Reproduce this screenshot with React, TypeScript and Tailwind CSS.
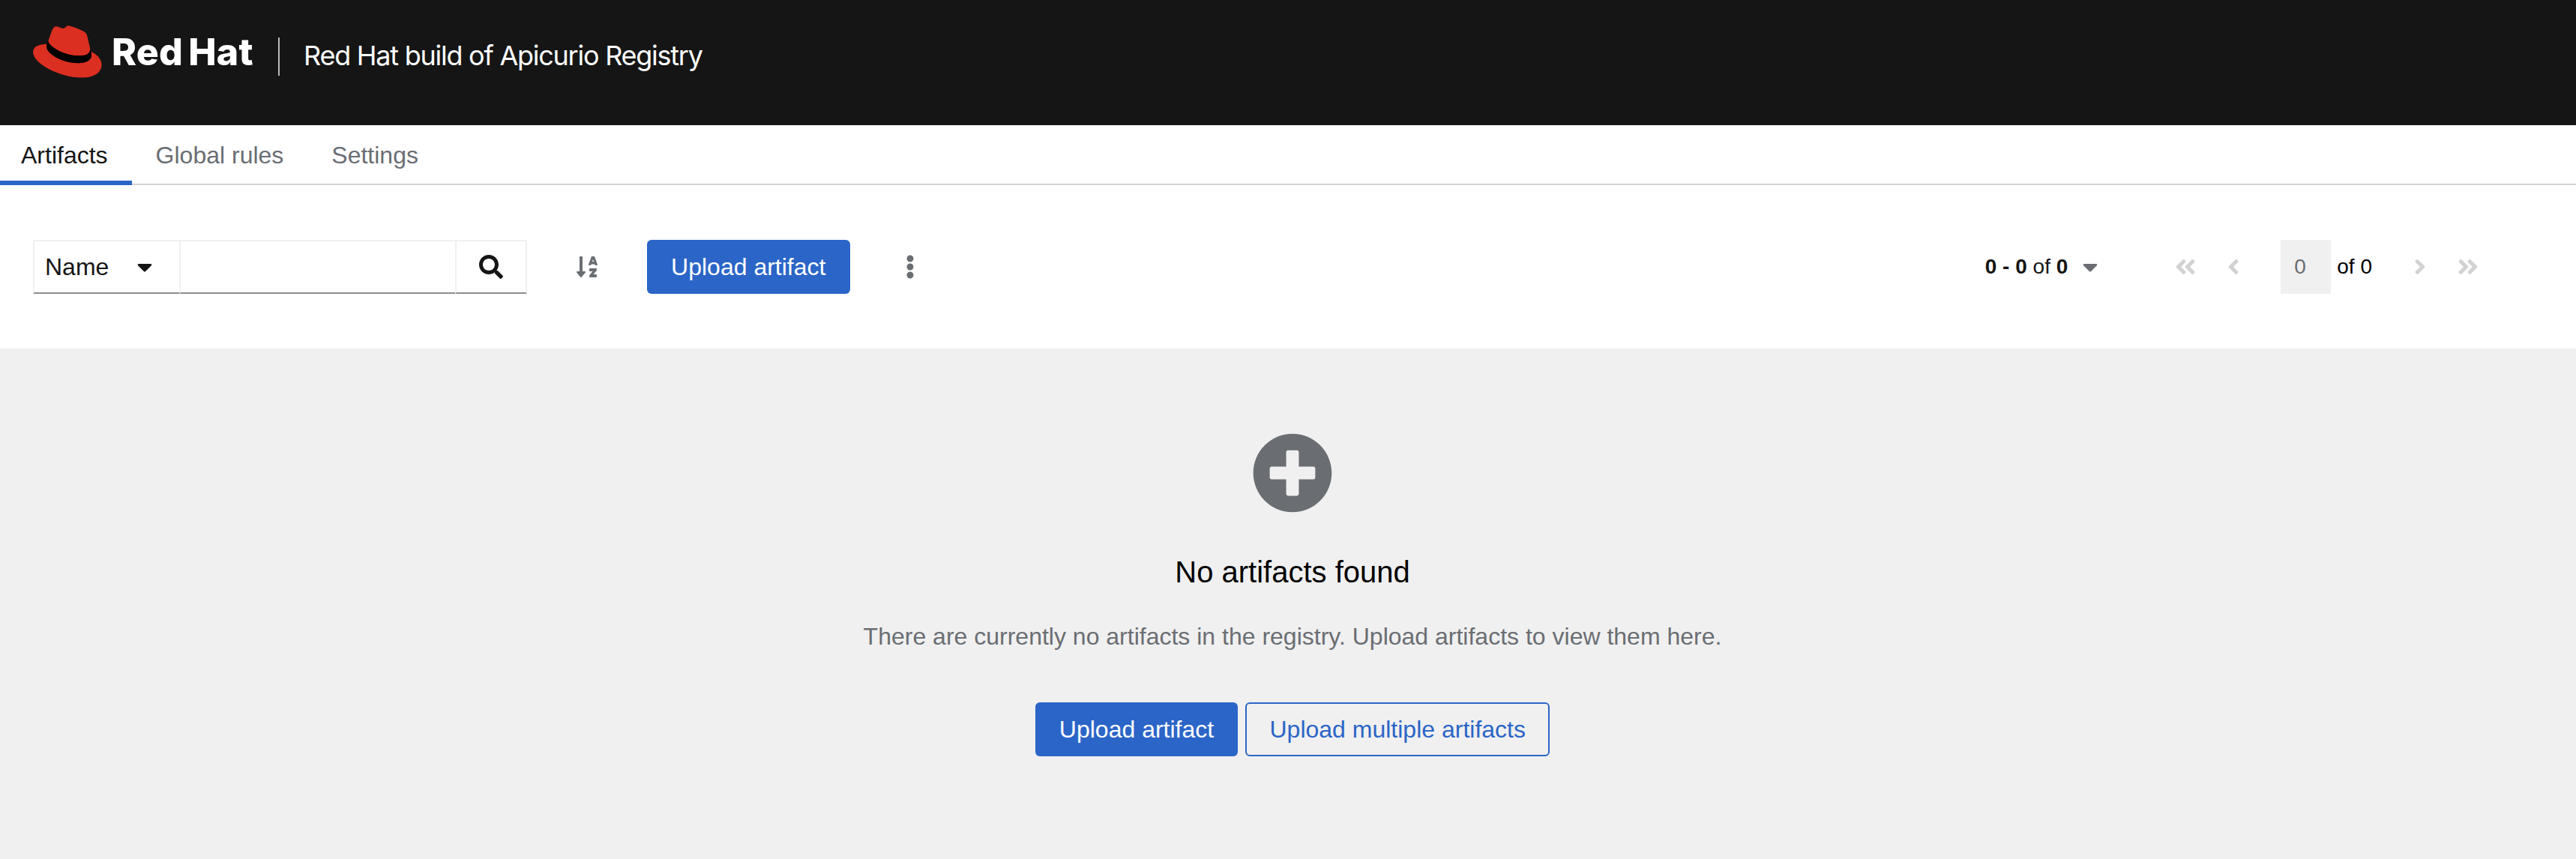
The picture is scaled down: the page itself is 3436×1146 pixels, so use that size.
import { useState } from "react";
import {
  FaAngleDoubleLeft,
  FaAngleDoubleRight,
  FaAngleLeft,
  FaAngleRight,
  FaCaretDown,
  FaEllipsisV,
  FaPlusCircle,
  FaSearch,
  FaSortAlphaDown,
} from "react-icons/fa";

function HatLogo() {
  return (
    <svg className="mt-[34px] h-[70px] w-[92px]" viewBox="0 0 190 145" aria-hidden="true">
      <path
        fill="#db2f21"
        d="M127,83.49c12.51,0,30.61-2.58,30.61-17.46a14,14,0,0,0-.31-3.42l-7.45-32.36c-1.72-7.12-3.23-10.35-15.73-16.6C124.42,8.69,103.3,.5,97.05,.5,91.23,.5,89.54,8,82.6,8,75.92,8,70.96,2.4,64.71,2.4c-6,0-9.91,4.09-12.93,12.5,0,0-8.41,23.72-9.49,27.16A6.43,6.43,0,0,0,42.07,44C42.07,53.22,78.38,83.49,127,83.49M159.53,72.11c1.73,8.19,1.73,9.05,1.73,10.13,0,14-15.74,21.77-36.43,21.77C78,104,37.04,76.6,37.04,58.55A18.45,18.45,0,0,1,38.55,51.28C21.75,52.1,0,55.1,0,74.22,0,105.54,74.22,144.14,133,144.14c45.08,0,56.45-20.39,56.45-36.48C189.43,95,178.48,80.62,159.53,72.11"
      />
      <path
        fill="#000"
        d="M159.53,72.11c1.73,8.19,1.73,9.05,1.73,10.13,0,14-15.74,21.77-36.43,21.77C78,104,37.04,76.6,37.04,58.55A18.45,18.45,0,0,1,38.55,51.28L42.3,42A6.43,6.43,0,0,0,42.07,44C42.07,53.22,78.38,83.49,127,83.49c12.51,0,30.61-2.58,30.61-17.46a14,14,0,0,0-.31-3.42Z"
      />
    </svg>
  );
}

function Masthead() {
  return (
    <header className="flex h-[167px] items-start bg-[#151515] pl-[44px] font-[Inter,sans-serif] whitespace-nowrap text-white">
      <HatLogo />
      <span className="mt-[39px] ml-[13px] w-[189px] text-[50px] leading-[60px] font-extrabold tracking-[0.2px] [word-spacing:-4px]">
        Red Hat
      </span>
      <span className="mt-[50px] ml-[33px] h-[51px] w-[2px] bg-[#b8bbbe]" />
      <h1 className="mt-[48px] ml-[32px] text-[36px] leading-[52px] tracking-[-1.25px]">
        Red Hat build of Apicurio Registry
      </h1>
    </header>
  );
}

const tabs = ["Artifacts", "Global rules", "Settings"];

function Tabs() {
  const [active, setActive] = useState(0);
  return (
    <nav className="flex h-[80px] shadow-[inset_0_-2px_0_#d2d2d2]">
      {tabs.map((tab, i) => (
        <button
          key={tab}
          onClick={() => setActive(i)}
          className={`pr-[32px] leading-[48px] first:pl-[28px] not-first:pl-[32px] ${
            i === active ? "text-[#151515] shadow-[inset_0_-6px_0_#2b65c7]" : "text-[#6a6e73]"
          }`}
        >
          {tab}
        </button>
      ))}
    </nav>
  );
}

function Primary() {
  return (
    <button className="h-[72px] w-[270.5px] rounded-[6px] bg-[#2b65c7] text-center whitespace-nowrap text-white">
      Upload artifact
    </button>
  );
}

const box = "h-[72px] border-2 border-[#f0f0f0] border-b-[#8a8d90]";

function Toolbar() {
  return (
    <section className="flex h-[218px] items-start bg-white pt-[73px] pl-[44px]">
      <div className="flex">
        <button className={`${box} flex w-[197px] items-center pl-[14px] text-[#151515]`}>
          <span className="w-[123px] text-left">Name</span>
          <FaCaretDown className="h-[32px] w-[20px]" />
        </button>
        <input className={`${box} -ml-[2px] w-[370px] outline-none`} aria-label="Filter" />
        <button className={`${box} -ml-[2px] flex w-[96px] items-center justify-center text-[#151515]`}>
          <FaSearch className="size-[32px]" />
        </button>
      </div>
      <button className="ml-[66px] flex h-[72px] w-[28px] items-center text-[#6a6e73]">
        <FaSortAlphaDown className="h-[32px] w-[28px]" />
      </button>
      <div className="ml-[66px] flex">
        <Primary />
      </div>
      <button className="ml-[74.5px] flex h-[72px] items-center text-[#6a6e73]">
        <FaEllipsisV className="h-[32px] w-[12px]" />
      </button>
      <div className="mr-[130px] ml-auto flex h-[72px] items-center text-[28px] text-[#d2d2d2]">
        <span className="text-[#151515]">
          <b>0 - 0</b> of <b>0</b>
        </span>
        <FaCaretDown className="ml-[20px] h-[32px] w-[20px] text-[#6a6e73]" />
        <FaAngleDoubleLeft className="ml-[103px] h-[32px] w-[28px]" />
        <FaAngleLeft className="ml-[42px] h-[32px] w-[16px]" />
        <span className="ml-[55px] h-[72px] w-[67px] bg-[#f0f0f0] pl-[18px] leading-[72px] text-[#6a6e73]">0</span>
        <span className="ml-[8px] text-black">of 0</span>
        <FaAngleRight className="ml-[56px] h-[32px] w-[16px]" />
        <FaAngleDoubleRight className="ml-[42px] h-[32px] w-[28px]" />
      </div>
    </section>
  );
}

function EmptyState() {
  return (
    <main className="flex h-[681px] flex-col items-center bg-[#f0f0f0] pt-[112px] pl-[12px]">
      <FaPlusCircle className="size-[108px] text-[#6a6e73]" />
      <h2 className="mt-[52px] text-[40px] leading-[52px] text-black">No artifacts found</h2>
      <p className="mt-[36px] leading-[48px] text-[#6a6e73]">
        There are currently no artifacts in the registry. Upload artifacts to view them here.
      </p>
      <div className="mt-[64px] flex gap-[10px]">
        <Primary />
        <button className="h-[72px] w-[406px] rounded-[6px] border-2 border-[#2b65c7] text-center whitespace-nowrap text-[#2b65c7]">
          Upload multiple artifacts
        </button>
      </div>
    </main>
  );
}

export default function App() {
  return (
    <div className="h-[1146px] w-[3436px] overflow-hidden bg-white font-['Liberation_Sans',Arial,sans-serif] text-[32px] leading-[48px]">
      <Masthead />
      <Tabs />
      <Toolbar />
      <EmptyState />
    </div>
  );
}
